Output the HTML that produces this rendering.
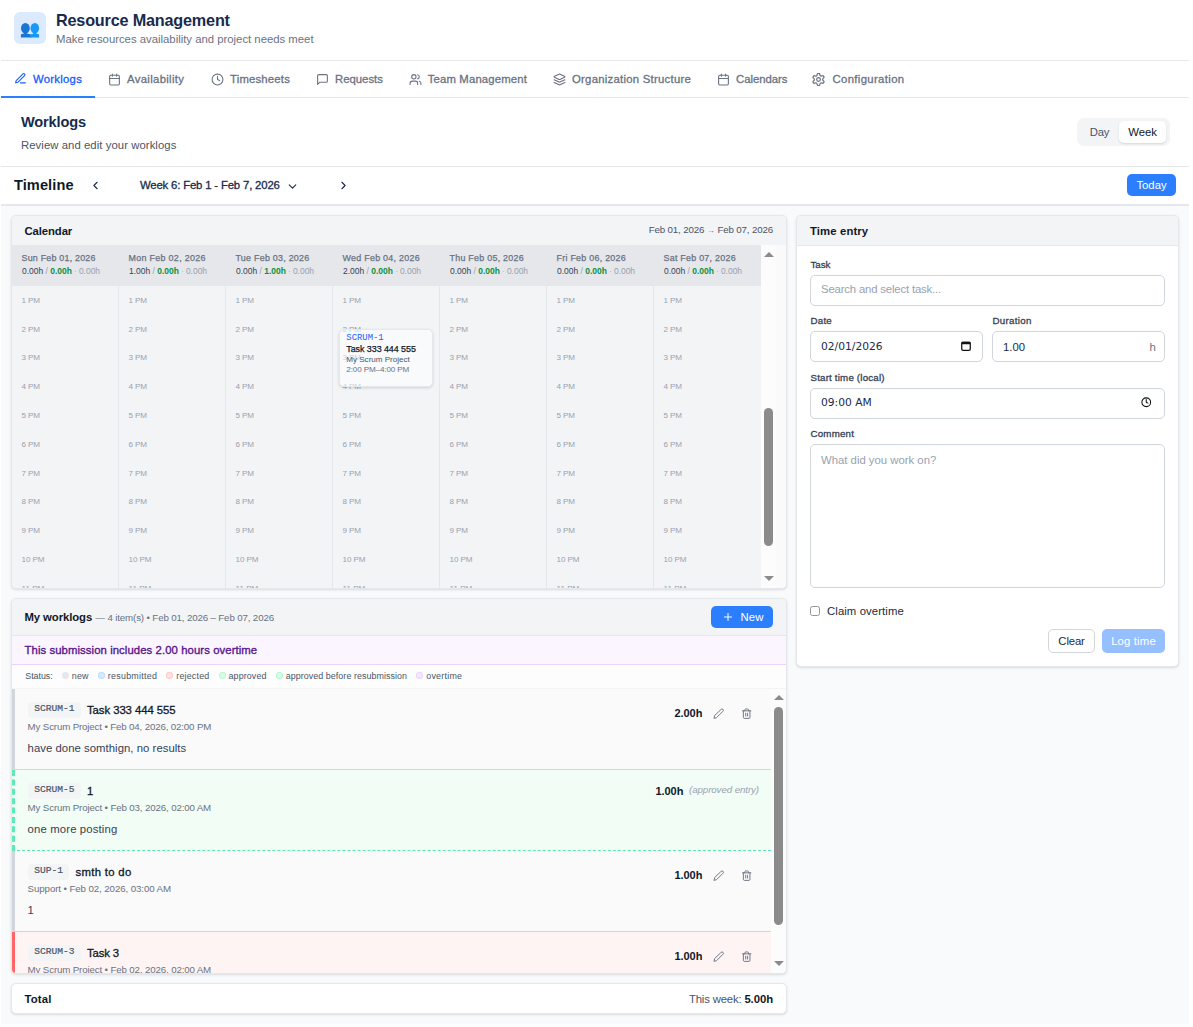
<!DOCTYPE html>
<html lang="en"><head>
<meta charset="utf-8">
<title>Resource Management</title>
<style>
:root{--f:"Liberation Sans",sans-serif;--m:"Liberation Mono",monospace;--d:"DejaVu Sans","Liberation Sans",sans-serif;--dm:"DejaVu Sans Mono","Liberation Mono",monospace;
--navy:#172b4d;--g700:#364153;--g600:#4a5565;--g500:#6a7282;--g400:#99a1af;--line:#e5e7eb;}
*{box-sizing:border-box}
html,body{margin:0;padding:0}
body{width:1193px;height:1027px;overflow:hidden;background:#fff;font-family:var(--f);font-size:11.34px;line-height:16.2px;color:var(--navy);position:relative}
svg{display:block}
.ico{fill:none;stroke:currentColor;stroke-width:2;stroke-linecap:round;stroke-linejoin:round}
.a{position:absolute;white-space:nowrap}
b{font-weight:700}
/* header */
#hdr{position:absolute;left:1px;top:0;width:1188px;height:61px;border-bottom:1px solid var(--line)}
#logo{position:absolute;left:13px;top:12px;width:32px;height:32px;border-radius:6px;background:#dbeafe}
#ttl{position:absolute;left:55px;top:9px;font-size:16.2px;line-height:22px;font-weight:700;white-space:nowrap}
#sub{position:absolute;left:55px;top:31px;color:var(--g500);white-space:nowrap}
/* tabs */
#tabs{position:absolute;left:1px;top:61px;width:1188px;height:37px;border-bottom:1px solid var(--line)}
.tab{position:absolute;top:0;height:36px;display:flex;align-items:center;font-weight:500;-webkit-text-stroke:.3px currentColor;color:var(--g500);white-space:nowrap}
.tab svg{width:13px;height:13px;margin-right:6px}
.tab.on svg{margin-bottom:2px}
.md{-webkit-text-stroke:.3px currentColor}
.tab.on{color:#155dfc}
.tab.on:after{content:"";position:absolute;left:-13px;width:94px;top:35px;height:1.600px;background:#2b7fff}
/* section head */
#sec{position:absolute;left:1px;top:98px;width:1188px;height:69px;border-bottom:1px solid var(--line)}
#sec h2{position:absolute;left:20px;top:14px;margin:0;font-size:14.58px;line-height:20px;font-weight:700;white-space:nowrap}
#sec p{position:absolute;left:20px;top:39px;margin:0;color:var(--g600);white-space:nowrap}
#tog{position:absolute;left:1076px;top:20px;width:93px;height:28px;border-radius:7px;background:#f3f4f6}
#tog span{position:absolute;top:3px;height:22px;line-height:22px;text-align:center}
#tog .d{left:3px;width:39px;color:var(--g600)}
#tog .w{left:42px;width:47px;background:#fff;border-radius:5px;box-shadow:0 1px 2px rgba(0,0,0,.12);color:#101828}
/* timeline */
#tl{position:absolute;left:1px;top:167px;width:1188px;height:39px;border-bottom:2px solid var(--line)}
#tl h3{position:absolute;left:13px;top:8px;margin:0;color:#101828;font-size:14.58px;line-height:20px;font-weight:700}
#tl svg{position:absolute;width:13px;height:13px;top:12px}
#tl .wk{position:absolute;left:139px;top:10px;font-weight:500;-webkit-text-stroke:.3px currentColor}
#today{position:absolute;left:1126px;top:7px;width:49px;height:22px;border-radius:5px;background:#2b7fff;color:#fff;text-align:center;line-height:22px}
/* main */
#main{position:absolute;left:1px;top:206px;width:1188px;height:818px;background:#f9fafb}
.card{position:absolute;border:1px solid var(--line);border-radius:5px;background:#fff;box-shadow:0 1px 3px 0 rgba(0,0,0,.1),0 1px 2px -1px rgba(0,0,0,.1);overflow:hidden}
.ch{position:absolute;left:0;top:0;right:0;background:#f3f4f6;border-bottom:1px solid var(--line)}
.ct{position:absolute;left:12.500px;font-weight:700;white-space:nowrap;color:#101828}

/* calendar */
#cal{left:10px;top:9px;width:776px;height:374px}
#cal .ch{height:29px;border-bottom:0}
#cal .ct{top:7px}
#cal .rng{position:absolute;right:13px;top:7px;font-size:9.72px;line-height:14px;color:var(--g600);white-space:nowrap}
#cal .rng i{font-style:normal;color:var(--g500);font-size:8px}
#dh{position:absolute;left:0;top:29px;width:749px;height:41px;background:#e5e7eb}
.dc{position:absolute;top:0;width:107px;height:41px;padding:6px 0 0 9.5px;font-size:9.72px;line-height:13px;white-space:nowrap}
.dc .dn{position:relative;top:1px;font-weight:500;color:var(--g500);font-size:8.91px;letter-spacing:.34px;-webkit-text-stroke:.25px currentColor}
.dc .dt{color:var(--g700);font-size:9.72px;margin-top:0px;transform:scaleX(.87);transform-origin:0 0}
.dc .dt b{color:#0b8f3c}
.dc .dt u{text-decoration:none;color:var(--g400)}
.dc .dt s{text-decoration:none;color:var(--g400);font-size:8px}
#hg{position:absolute;left:0;top:70px;width:749px;height:303px;background:#f3f4f6;overflow:hidden}
.hc{position:absolute;top:0;width:107px;height:303px;border-right:1px solid #e5e7eb}
.hc:last-child{border-right:0}
.hc span{position:absolute;left:9.5px;font-size:8.1px;line-height:10px;color:var(--g400);white-space:nowrap}
.hc:first-child span{left:9.5px}
#sb1{position:absolute;left:749px;top:29px;width:15px;height:344px;background:#fcfcfc}
#sbx{position:absolute;left:764px;top:29px;width:10px;height:344px;background:#fafafa}
.sbt{position:absolute;left:3px;width:9px;border-radius:5px;background:#8b8b8b}
.sbu,.sbd{position:absolute;left:2.500px;width:0;height:0;border-left:5.200px solid transparent;border-right:5.200px solid transparent}
.sbu{border-bottom:5.500px solid #8b8b8b}
.sbd{border-top:5.500px solid #8b8b8b}
#ev{position:absolute;left:327px;top:113px;width:94px;height:58px;border-radius:5px;background:rgba(255,255,255,.5);border:1px solid #e5e7eb;box-shadow:0 1px 3px rgba(0,0,0,.15);padding:1px 6.300px;white-space:nowrap;overflow:hidden}
#ev .k{position:relative;top:1px;font-family:var(--m);font-size:8.91px;line-height:12px;color:#155dfc}
#ev .n{font-size:8.91px;line-height:12px;font-weight:500;color:#101828;-webkit-text-stroke:.25px currentColor}
#ev .p{font-size:8.1px;line-height:9.6px;color:var(--g600)}
#ev .h{font-size:8.1px;line-height:10.4px;color:var(--g500)}
/* worklogs */
#wl{left:10px;top:392px;width:776px;height:376px}
#wl .ch{height:37px}
#wl .ct{top:10px}
#wl .ct .cnt{font-weight:400;font-size:9.72px;color:var(--g500)}
#new{position:absolute;left:699px;top:7px;width:62px;height:22px;border-radius:5px;background:#2b7fff;color:#fff;line-height:22px;padding-left:29.500px}
#new svg{position:absolute;left:11px;top:5px;width:12px;height:12px}
#ot{position:absolute;left:0;top:37px;right:0;height:29px;background:#faf5ff;border-bottom:1px solid #e9d4ff;color:#59168b;font-weight:500;-webkit-text-stroke:.35px currentColor;padding:6px 12.500px;white-space:nowrap}
#lg{position:absolute;left:0;top:66px;right:0;height:24px;background:#fdfdfd;border-bottom:1px solid #f3f4f6;font-size:8.91px;line-height:12px;color:var(--g600);padding:4px 13.300px 6px;white-space:nowrap;display:flex;gap:9.100px;align-items:center}
#lg span{display:inline-flex;align-items:center;gap:3px}
#lg em{font-style:normal}
#lg i{display:block;flex:none;width:7px;height:6.500px;border-radius:50%;border:1px solid}
#list{position:absolute;left:0;top:90px;width:759px;height:284px;overflow:hidden;background:#fafafa}
.it{position:absolute;left:0;width:759px;height:81px;border-left:3px solid #d1d5dc;border-bottom:1px solid #d1d5dc;background:#fafafa}
.it .bd{position:absolute;left:13px;top:13px;height:16px;padding:0 6.300px;border-radius:4px;background:#f3f4f6;font-family:var(--m);font-size:9.6px;line-height:14px;color:var(--g600);-webkit-text-stroke:.2px currentColor;white-space:nowrap}
.it .tt{position:absolute;top:13px;font-weight:500;-webkit-text-stroke:.3px currentColor;color:#101828;white-space:nowrap}
.it .mt{position:absolute;left:12.600px;top:31px;font-size:9.72px;line-height:14px;color:var(--g500);white-space:nowrap}
.it .cm{position:absolute;left:12.600px;top:51px;color:var(--g700);white-space:nowrap}
.it .hr{position:absolute;top:16px;font-size:11px;font-weight:700;color:#101828;white-space:nowrap}
.it .ap{position:absolute;top:12px;left:674px;font-size:9.72px;font-style:italic;color:var(--g400);white-space:nowrap}
.it svg{position:absolute;top:18.700px;width:11.340px;height:11.340px;color:var(--g500);stroke-width:2}
#sb2{position:absolute;left:759px;top:90px;width:15px;height:284px;background:#fcfcfc}
/* total */
#tot{left:10px;top:777px;width:776px;height:31px}
#tot .ct{top:7px;color:#101828;left:12.400px}
#tot .wk{position:absolute;right:13px;top:7px;white-space:nowrap;color:var(--g600)}
#tot .wk b{color:#101828}
/* time entry */
#te{left:795px;top:9px;width:383px;height:452px}
#te .ch{height:30px}
#te .ct{top:7px;left:13px}
.lb{position:absolute;left:13.500px;margin-top:-1px;font-size:9.72px;line-height:12px;font-weight:500;-webkit-text-stroke:.3px currentColor;color:var(--g700);white-space:nowrap}
.in{position:absolute;left:13px;height:31px;border:1px solid #d1d5dc;border-radius:5px;background:#fff;padding:0 10px;line-height:29px;white-space:nowrap;color:var(--navy)}
.in.ph{color:var(--g400)}
.in.dj{font-family:var(--d);font-size:10.7px;line-height:30px}
.btn{position:absolute;top:413px;height:24px;border-radius:5px;line-height:22px;text-align:center;white-space:nowrap}
</style>
</head>
<body>
<div id="hdr">
  <div id="logo"><svg viewBox="0 0 32 32" width="32" height="32"><g fill="#1976d2"><ellipse cx="11.400" cy="16.300" rx="4.400" ry="5.400"></ellipse><path d="M6.900 25.500V23.100Q6.900 22.200 7.800 22L10.200 21.500V20H12.600V21.500L17.500 22.600V25.500Z"></path></g><g fill="#1a98f5"><ellipse cx="20.800" cy="16.300" rx="4.300" ry="5.400"></ellipse><path d="M16.200 25.500V22.700L19.600 21.500V20H22V21.500L24.200 22Q25.100 22.200 25.100 23.100V25.500Z"></path></g></svg></div>
  <div id="ttl" style="letter-spacing: -0.18px;">Resource Management</div>
  <div id="sub">Make resources availability and project needs meet</div>
</div>
<div id="tabs">
  <div class="tab on" style="left:13px"><svg class="ico" viewBox="0 0 24 24"><path d="M12 20h9"></path><path d="M16.5 3.5a2.12 2.12 0 0 1 3 3L7 19l-4 1 1-4Z"></path></svg><span style="letter-spacing: 0.26px;">Worklogs</span></div>
  <div class="tab" style="left:107px"><svg class="ico" viewBox="0 0 24 24"><rect width="18" height="18" x="3" y="4" rx="2" ry="2"></rect><line x1="16" x2="16" y1="2" y2="6"></line><line x1="8" x2="8" y1="2" y2="6"></line><line x1="3" x2="21" y1="10" y2="10"></line></svg><span style="letter-spacing: 0.33px;">Availability</span></div>
  <div class="tab" style="left:210px"><svg class="ico" viewBox="0 0 24 24"><circle cx="12" cy="12" r="10"></circle><polyline points="12 6 12 12 16 14"></polyline></svg><span style="letter-spacing: 0.19px;">Timesheets</span></div>
  <div class="tab" style="left:315px"><svg class="ico" viewBox="0 0 24 24"><path d="M21 15a2 2 0 0 1-2 2H7l-4 4V5a2 2 0 0 1 2-2h14a2 2 0 0 1 2 2z"></path></svg>Requests</div>
  <div class="tab" style="left:407.700px"><svg class="ico" viewBox="0 0 24 24"><path d="M16 21v-2a4 4 0 0 0-4-4H6a4 4 0 0 0-4 4v2"></path><circle cx="9" cy="7" r="4"></circle><path d="M22 21v-2a4 4 0 0 0-3-3.870"></path><path d="M16 3.130a4 4 0 0 1 0 7.750"></path></svg><span style="letter-spacing: 0.16px;">Team Management</span></div>
  <div class="tab" style="left:552px"><svg class="ico" viewBox="0 0 24 24"><path d="m12.830 2.180a2 2 0 0 0-1.660 0L2.600 6.080a1 1 0 0 0 0 1.830l8.580 3.910a2 2 0 0 0 1.660 0l8.580-3.900a1 1 0 0 0 0-1.830Z"></path><path d="m22 17.650-9.170 4.160a2 2 0 0 1-1.660 0L2 17.650"></path><path d="m22 12.650-9.170 4.160a2 2 0 0 1-1.660 0L2 12.650"></path></svg><span style="letter-spacing: 0.26px;">Organization Structure</span></div>
  <div class="tab" style="left:716px"><svg class="ico" viewBox="0 0 24 24"><rect width="18" height="18" x="3" y="4" rx="2" ry="2"></rect><line x1="16" x2="16" y1="2" y2="6"></line><line x1="8" x2="8" y1="2" y2="6"></line><line x1="3" x2="21" y1="10" y2="10"></line></svg><span style="letter-spacing: -0.03px;">Calendars</span></div>
  <div class="tab" style="left:811px"><svg class="ico" viewBox="1.300 1.300 21.400 21.400" style="margin-right:7.500px"><path d="M12.220 2h-.440a2 2 0 0 0-2 2v.180a2 2 0 0 1-1 1.730l-.430.250a2 2 0 0 1-2 0l-.150-.080a2 2 0 0 0-2.730.730l-.220.380a2 2 0 0 0 .730 2.730l.150.100a2 2 0 0 1 1 1.720v.510a2 2 0 0 1-1 1.740l-.150.090a2 2 0 0 0-.730 2.730l.220.380a2 2 0 0 0 2.730.730l.150-.080a2 2 0 0 1 2 0l.430.250a2 2 0 0 1 1 1.730V20a2 2 0 0 0 2 2h.440a2 2 0 0 0 2-2v-.180a2 2 0 0 1 1-1.730l.430-.250a2 2 0 0 1 2 0l.150.080a2 2 0 0 0 2.730-.730l.220-.390a2 2 0 0 0-.730-2.730l-.150-.080a2 2 0 0 1-1-1.740v-.500a2 2 0 0 1 1-1.740l.150-.090a2 2 0 0 0 .730-2.730l-.220-.380a2 2 0 0 0-2.730-.730l-.150.080a2 2 0 0 1-2 0l-.430-.250a2 2 0 0 1-1-1.730V4a2 2 0 0 0-2-2z"></path><circle cx="12" cy="12" r="3"></circle></svg><span style="letter-spacing: 0.35px;">Configuration</span></div>
</div>
<div id="sec">
  <h2 style="letter-spacing: -0.15px;">Worklogs</h2>
  <p style="letter-spacing: 0.06px;">Review and edit your worklogs</p>
  <div id="tog"><span class="d" style="letter-spacing: -0.29px;">Day</span><span class="w" style="letter-spacing: -0.05px;">Week</span></div>
</div>
<div id="tl">
  <h3 style="letter-spacing: 0.09px;">Timeline</h3>
  <svg class="ico" viewBox="0 0 24 24" style="left:88px"><path d="m15 18-6-6 6-6"></path></svg>
  <div class="wk" style="letter-spacing: -0.16px;">Week 6: Feb 1 - Feb 7, 2026</div>
  <svg class="ico" viewBox="0 0 24 24" style="left:285px;top:13px"><path d="m6 9 6 6 6-6"></path></svg>
  <svg class="ico" viewBox="0 0 24 24" style="left:336px"><path d="m9 18 6-6-6-6"></path></svg>
  <div id="today">Today</div>
</div>
<div id="main">
<div class="card" id="cal">
<div class="ch"><div class="ct" style="letter-spacing: -0.1px;">Calendar</div><div class="rng"><span style="letter-spacing: -0.14px;">Feb 01, 2026 </span><i>→</i><span style="letter-spacing: -0.14px;"> Feb 07, 2026</span></div></div>
<div id="dh">
<div class="dc" style="left:0px"><div class="dn" style="letter-spacing: 0.21px;">Sun Feb 01, 2026</div><div class="dt">0.00h <u>/</u> <b>0.00h</b> <s>·</s> <u>0.00h</u></div></div>
<div class="dc" style="left:107px"><div class="dn" style="letter-spacing: 0.31px;">Mon Feb 02, 2026</div><div class="dt">1.00h <u>/</u> <b>0.00h</b> <s>·</s> <u>0.00h</u></div></div>
<div class="dc" style="left:214px"><div class="dn" style="letter-spacing: 0.25px;">Tue Feb 03, 2026</div><div class="dt">0.00h <u>/</u> <b>1.00h</b> <s>·</s> <u>0.00h</u></div></div>
<div class="dc" style="left:321px"><div class="dn" style="letter-spacing: 0.27px;">Wed Feb 04, 2026</div><div class="dt">2.00h <u>/</u> <b>0.00h</b> <s>·</s> <u>0.00h</u></div></div>
<div class="dc" style="left:428px"><div class="dn" style="letter-spacing: 0.26px;">Thu Feb 05, 2026</div><div class="dt">0.00h <u>/</u> <b>0.00h</b> <s>·</s> <u>0.00h</u></div></div>
<div class="dc" style="left:535px"><div class="dn" style="letter-spacing: 0.26px;">Fri Feb 06, 2026</div><div class="dt">0.00h <u>/</u> <b>0.00h</b> <s>·</s> <u>0.00h</u></div></div>
<div class="dc" style="left:642px"><div class="dn" style="letter-spacing: 0.25px;">Sat Feb 07, 2026</div><div class="dt">0.00h <u>/</u> <b>0.00h</b> <s>·</s> <u>0.00h</u></div></div>
</div>
<div id="hg">
<div class="hc" style="left:0px"><span style="top: 9.8px; letter-spacing: -0.15px;">1 PM</span><span style="top: 38.6px; letter-spacing: -0.15px;">2 PM</span><span style="top: 67.4px; letter-spacing: -0.15px;">3 PM</span><span style="top: 96.2px; letter-spacing: -0.15px;">4 PM</span><span style="top: 125px; letter-spacing: -0.15px;">5 PM</span><span style="top: 153.8px; letter-spacing: -0.15px;">6 PM</span><span style="top: 182.6px; letter-spacing: -0.15px;">7 PM</span><span style="top: 211.4px; letter-spacing: -0.15px;">8 PM</span><span style="top: 240.2px; letter-spacing: -0.15px;">9 PM</span><span style="top: 269px; letter-spacing: -0.11px;">10 PM</span><span style="top:297.8px">11 PM</span></div>
<div class="hc" style="left:107px"><span style="top: 9.8px; letter-spacing: -0.15px;">1 PM</span><span style="top: 38.6px; letter-spacing: -0.15px;">2 PM</span><span style="top: 67.4px; letter-spacing: -0.15px;">3 PM</span><span style="top: 96.2px; letter-spacing: -0.15px;">4 PM</span><span style="top: 125px; letter-spacing: -0.15px;">5 PM</span><span style="top: 153.8px; letter-spacing: -0.15px;">6 PM</span><span style="top: 182.6px; letter-spacing: -0.15px;">7 PM</span><span style="top: 211.4px; letter-spacing: -0.15px;">8 PM</span><span style="top: 240.2px; letter-spacing: -0.15px;">9 PM</span><span style="top: 269px; letter-spacing: -0.11px;">10 PM</span><span style="top:297.8px">11 PM</span></div>
<div class="hc" style="left:214px"><span style="top: 9.8px; letter-spacing: -0.15px;">1 PM</span><span style="top: 38.6px; letter-spacing: -0.15px;">2 PM</span><span style="top: 67.4px; letter-spacing: -0.15px;">3 PM</span><span style="top: 96.2px; letter-spacing: -0.15px;">4 PM</span><span style="top: 125px; letter-spacing: -0.15px;">5 PM</span><span style="top: 153.8px; letter-spacing: -0.15px;">6 PM</span><span style="top: 182.6px; letter-spacing: -0.15px;">7 PM</span><span style="top: 211.4px; letter-spacing: -0.15px;">8 PM</span><span style="top: 240.2px; letter-spacing: -0.15px;">9 PM</span><span style="top: 269px; letter-spacing: -0.11px;">10 PM</span><span style="top:297.8px">11 PM</span></div>
<div class="hc" style="left:321px"><span style="top: 9.8px; letter-spacing: -0.15px;">1 PM</span><span style="top: 38.6px; letter-spacing: -0.15px;">2 PM</span><span style="top: 67.4px; letter-spacing: -0.15px;">3 PM</span><span style="top: 96.2px; letter-spacing: -0.15px;">4 PM</span><span style="top: 125px; letter-spacing: -0.15px;">5 PM</span><span style="top: 153.8px; letter-spacing: -0.15px;">6 PM</span><span style="top: 182.6px; letter-spacing: -0.15px;">7 PM</span><span style="top: 211.4px; letter-spacing: -0.15px;">8 PM</span><span style="top: 240.2px; letter-spacing: -0.15px;">9 PM</span><span style="top: 269px; letter-spacing: -0.11px;">10 PM</span><span style="top:297.8px">11 PM</span></div>
<div class="hc" style="left:428px"><span style="top: 9.8px; letter-spacing: -0.15px;">1 PM</span><span style="top: 38.6px; letter-spacing: -0.15px;">2 PM</span><span style="top: 67.4px; letter-spacing: -0.15px;">3 PM</span><span style="top: 96.2px; letter-spacing: -0.15px;">4 PM</span><span style="top: 125px; letter-spacing: -0.15px;">5 PM</span><span style="top: 153.8px; letter-spacing: -0.15px;">6 PM</span><span style="top: 182.6px; letter-spacing: -0.15px;">7 PM</span><span style="top: 211.4px; letter-spacing: -0.15px;">8 PM</span><span style="top: 240.2px; letter-spacing: -0.15px;">9 PM</span><span style="top: 269px; letter-spacing: -0.11px;">10 PM</span><span style="top:297.8px">11 PM</span></div>
<div class="hc" style="left:535px"><span style="top: 9.8px; letter-spacing: -0.15px;">1 PM</span><span style="top: 38.6px; letter-spacing: -0.15px;">2 PM</span><span style="top: 67.4px; letter-spacing: -0.15px;">3 PM</span><span style="top: 96.2px; letter-spacing: -0.15px;">4 PM</span><span style="top: 125px; letter-spacing: -0.15px;">5 PM</span><span style="top: 153.8px; letter-spacing: -0.15px;">6 PM</span><span style="top: 182.6px; letter-spacing: -0.15px;">7 PM</span><span style="top: 211.4px; letter-spacing: -0.15px;">8 PM</span><span style="top: 240.2px; letter-spacing: -0.15px;">9 PM</span><span style="top: 269px; letter-spacing: -0.11px;">10 PM</span><span style="top:297.8px">11 PM</span></div>
<div class="hc" style="left:642px"><span style="top: 9.8px; letter-spacing: -0.15px;">1 PM</span><span style="top: 38.6px; letter-spacing: -0.15px;">2 PM</span><span style="top: 67.4px; letter-spacing: -0.15px;">3 PM</span><span style="top: 96.2px; letter-spacing: -0.15px;">4 PM</span><span style="top: 125px; letter-spacing: -0.15px;">5 PM</span><span style="top: 153.8px; letter-spacing: -0.15px;">6 PM</span><span style="top: 182.6px; letter-spacing: -0.15px;">7 PM</span><span style="top: 211.4px; letter-spacing: -0.15px;">8 PM</span><span style="top: 240.2px; letter-spacing: -0.15px;">9 PM</span><span style="top: 269px; letter-spacing: -0.11px;">10 PM</span><span style="top:297.8px">11 PM</span></div>
</div>
<div id="ev"><div class="k">SCRUM-1</div><div class="n" style="letter-spacing: -0.05px;">Task 333 444 555</div><div class="p" style="letter-spacing: -0.03px;">My Scrum Project</div><div class="h" style="letter-spacing: -0.13px;">2:00 PM–4:00 PM</div></div>
<div id="sb1"><div class="sbu" style="top:7px"></div><div class="sbt" style="top:163px;height:138px"></div><div class="sbd" style="top:331px"></div></div><div id="sbx"></div>
</div>

<div class="card" id="wl">
<div class="ch"><div class="ct"><b style="letter-spacing: -0.09px;">My worklogs</b> <span class="cnt" style="letter-spacing: -0.14px;">— 4 item(s) • Feb 01, 2026 – Feb 07, 2026</span></div><div id="new"><svg class="ico" viewBox="0 0 24 24"><path d="M5 12h14"></path><path d="M12 5v14"></path></svg><span style="letter-spacing: 0.16px;">New</span></div></div>
<div id="ot" style="letter-spacing: 0.08px;">This submission includes 2.00 hours overtime</div>
<div id="lg"><span style="letter-spacing: -0.05px;">Status:</span><span><i style="background:#e5e7eb;border-color:#e5e7eb"></i><em style="letter-spacing: 0.19px;">new</em></span><span><i style="background:#dbeafe;border-color:#bedbff"></i><em style="letter-spacing: 0.26px;">resubmitted</em></span><span><i style="background:#ffe2e2;border-color:#ffc9c9"></i><em style="letter-spacing: 0.18px;">rejected</em></span><span><i style="background:#dcfce7;border-color:#b9f8cf"></i><em style="letter-spacing: 0.11px;">approved</em></span><span><i style="background:#d8fbe8;border-color:#b4f6d2"></i><em style="letter-spacing: 0.06px;">approved before resubmission</em></span><span><i style="background:#f3e8ff;border-color:#e9d4ff"></i><em style="letter-spacing: 0.24px;">overtime</em></span></div>
<div id="list">
<div class="it" style="top:0px;"><span class="bd">SCRUM-1</span><span class="tt" style="left: 72px; letter-spacing: -0.06px;">Task 333 444 555</span><div class="mt"><span style="letter-spacing: -0.15px;">My Scrum Project • Feb 04, 2026, 02:00 PM</span></div><div class="cm" style="letter-spacing: 0.04px;">have done somthign, no results</div><span class="hr" style="left: 659.5px; letter-spacing: -0.07px;">2.00h</span><svg class="ico" viewBox="0 0 24 24" style="left:697.900px"><path d="M17 3a2.850 2.830 0 1 1 4 4L7.500 20.500 2 22l1.500-5.500Z"></path></svg><svg class="ico" viewBox="0 0 24 24" style="left:726.300px"><path d="M3 6h18"></path><path d="M19 6v14c0 1-1 2-2 2H7c-1 0-2-1-2-2V6"></path><path d="M8 6V4c0-1 1-2 2-2h4c1 0 2 1 2 2v2"></path><line x1="10" x2="10" y1="11" y2="17"></line><line x1="14" x2="14" y1="11" y2="17"></line></svg></div>
<div class="it" style="top:81px;background:#f2fdf6;border-left:3px dashed #5ee9b5;border-bottom:1px dashed #5ee9b5;"><span class="bd">SCRUM-5</span><span class="tt" style="left: 72px; letter-spacing: 0.08px;">1</span><div class="mt"><span style="letter-spacing: -0.14px;">My Scrum Project • Feb 03, 2026, 02:00 AM</span></div><div class="cm" style="letter-spacing: 0.14px;">one more posting</div><span class="hr" style="left: 640.5px; top: 13px; letter-spacing: -0.07px;">1.00h</span><span class="ap" style="letter-spacing: -0.08px;">(approved entry)</span></div>
<div class="it" style="top:162px;"><span class="bd">SUP-1</span><span class="tt" style="left: 60.5px; letter-spacing: 0.31px;">smth to do</span><div class="mt"><span style="letter-spacing: -0.1px;">Support • Feb 02, 2026, 03:00 AM</span></div><div class="cm" style="letter-spacing: 0.08px;">1</div><span class="hr" style="left: 659.5px; letter-spacing: -0.07px;">1.00h</span><svg class="ico" viewBox="0 0 24 24" style="left:697.900px"><path d="M17 3a2.850 2.830 0 1 1 4 4L7.500 20.500 2 22l1.500-5.500Z"></path></svg><svg class="ico" viewBox="0 0 24 24" style="left:726.300px"><path d="M3 6h18"></path><path d="M19 6v14c0 1-1 2-2 2H7c-1 0-2-1-2-2V6"></path><path d="M8 6V4c0-1 1-2 2-2h4c1 0 2 1 2 2v2"></path><line x1="10" x2="10" y1="11" y2="17"></line><line x1="14" x2="14" y1="11" y2="17"></line></svg></div>
<div class="it" style="top:243px;background:#fff4f4;border-left-color:#ff6467;"><span class="bd">SCRUM-3</span><span class="tt" style="left: 72px; letter-spacing: -0.12px;">Task 3</span><div class="mt"><span style="letter-spacing: -0.14px;">My Scrum Project • Feb 02, 2026, 02:00 AM</span></div><div class="cm"></div><span class="hr" style="left: 659.5px; letter-spacing: -0.07px;">1.00h</span><svg class="ico" viewBox="0 0 24 24" style="left:697.900px"><path d="M17 3a2.850 2.830 0 1 1 4 4L7.500 20.500 2 22l1.500-5.500Z"></path></svg><svg class="ico" viewBox="0 0 24 24" style="left:726.300px"><path d="M3 6h18"></path><path d="M19 6v14c0 1-1 2-2 2H7c-1 0-2-1-2-2V6"></path><path d="M8 6V4c0-1 1-2 2-2h4c1 0 2 1 2 2v2"></path><line x1="10" x2="10" y1="11" y2="17"></line><line x1="14" x2="14" y1="11" y2="17"></line></svg></div>
</div>
<div id="sb2"><div class="sbu" style="top:6px"></div><div class="sbt" style="top:18px;height:218px"></div><div class="sbd" style="top:272px"></div></div>
</div>

<div class="card" id="tot"><div class="ct" style="letter-spacing: 0.18px;">Total</div><div class="wk"><span style="letter-spacing: -0.17px;">This week: </span><b style="letter-spacing: -0.07px;">5.00h</b></div></div>

<div class="card" id="te">
<div class="ch"><div class="ct" style="letter-spacing: 0.12px;">Time entry</div></div>
<div class="lb" style="top: 44px; letter-spacing: -0.06px;">Task</div>
<div class="in ph" style="top: 59px; width: 355px; line-height: 27px; letter-spacing: -0.16px;">Search and select task...</div>
<div class="lb" style="top: 100px; letter-spacing: 0.23px;">Date</div>
<div class="in dj" style="top:115px;width:173px">02/01/2026<svg viewBox="0 0 24 24" style="position:absolute;left:149px;top:8px;width:12px;height:12px"><rect x="3.500" y="4.500" width="17" height="16" rx="2.500" fill="none" stroke="#111" stroke-width="2.500"></rect><rect x="3" y="3.500" width="18" height="5" rx="1.500" fill="#111"></rect></svg></div>
<div class="lb" style="top: 100px; left: 195.5px; letter-spacing: 0.32px;">Duration</div>
<div class="in" style="top:115px;left:195px;width:173px;line-height:30px"><span style="letter-spacing: -0.02px;">1.00</span><span style="position: absolute; right: 8px; top: 0px; color: rgb(106, 114, 130); letter-spacing: 0.16px;">h</span></div>
<div class="lb" style="top: 157px; letter-spacing: 0.19px;">Start time (local)</div>
<div class="in dj" style="top:172px;width:355px;line-height:28.500px">09:00 AM<svg class="ico" viewBox="0 0 24 24" style="position:absolute;left:329.800px;top:8.200px;width:10.500px;height:10.500px;color:#111;stroke-width:2.400"><circle cx="12" cy="12" r="10"></circle><polyline points="12 6 12 12 16 14"></polyline></svg></div>
<div class="lb" style="top: 213px; letter-spacing: 0.21px;">Comment</div>
<div class="in ph" style="top:228px;width:355px;height:144px;line-height:16px;padding-top:7px">What did you work on?</div>
<div style="position:absolute;left:13px;top:390px;width:10px;height:10px;border:1px solid #959595;border-radius:2.500px;background:#fff"></div>
<div class="a" style="left: 30px; top: 387px; color: rgb(30, 41, 57); letter-spacing: 0.09px;">Claim overtime</div>
<div class="btn" style="left: 251px; width: 47px; border: 1px solid rgb(209, 213, 220); background: rgb(255, 255, 255); color: rgb(30, 41, 57); letter-spacing: -0.16px;">Clear</div>
<div class="btn" style="left: 305px; width: 63px; background: rgb(149, 191, 255); color: rgb(255, 255, 255); line-height: 24px; letter-spacing: 0.16px;">Log time</div>
</div>

</div>


</body></html>
